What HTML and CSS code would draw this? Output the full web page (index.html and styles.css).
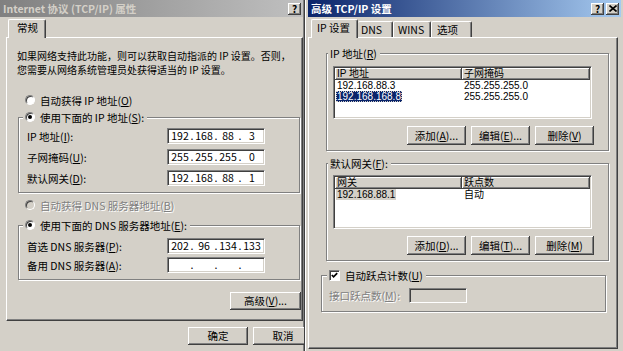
FILE: index.html
```html
<!DOCTYPE html>
<html lang="zh-CN">
<head>
    <meta charset="UTF-8">
    <title>TCP/IP 属性</title>
    <link rel="stylesheet" href="styles.css">
</head>
<body>
    <div class="screen">
        <!-- Internet 协议 (TCP/IP) 属性 -->
        <div class="window win-left">
            <div class="titlebar inactive">
                <span class="title">Internet 协议 (TCP/IP) 属性</span>
                <span class="tbtns"><span class="tbtn">?</span></span>
            </div>
            <div class="tabs tabs-left">
                <div class="tab selected tab-general">常规</div>
            </div>
            <div class="panel panel-left">
                <div class="intro">
                    <div>如果网络支持此功能，则可以获取自动指派的 IP 设置。否则，</div>
                    <div>您需要从网络系统管理员处获得适当的 IP 设置。</div>
                </div>
                <div class="opt opt-auto-ip"><span class="radio"></span>自动获得 IP 地址(<u>O</u>)</div>
                <div class="group group-ip">
                    <div class="legend"><span class="radio on"></span>使用下面的 IP 地址(<u>S</u>):</div>
                    <div class="field"><span class="lbl">IP 地址(<u>I</u>):</span>
                        <span class="ipbox"><span class="oct">192</span><span class="dot">.</span><span class="oct">168</span><span class="dot">.</span><span class="oct">88</span><span class="dot">.</span><span class="oct">3</span></span></div>
                    <div class="field gap5"><span class="lbl">子网掩码(<u>U</u>):</span>
                        <span class="ipbox"><span class="oct">255</span><span class="dot">.</span><span class="oct">255</span><span class="dot">.</span><span class="oct">255</span><span class="dot">.</span><span class="oct">0</span></span></div>
                    <div class="field gap5"><span class="lbl">默认网关(<u>D</u>):</span>
                        <span class="ipbox"><span class="oct">192</span><span class="dot">.</span><span class="oct">168</span><span class="dot">.</span><span class="oct">88</span><span class="dot">.</span><span class="oct">1</span></span></div>
                </div>
                <div class="opt opt-auto-dns disabled"><span class="radio off"></span>自动获得 DNS 服务器地址(<u>B</u>)</div>
                <div class="group group-dns">
                    <div class="legend"><span class="radio on"></span>使用下面的 DNS 服务器地址(<u>E</u>):</div>
                    <div class="field"><span class="lbl">首选 DNS 服务器(<u>P</u>):</span>
                        <span class="ipbox"><span class="oct">202</span><span class="dot">.</span><span class="oct">96</span><span class="dot">.</span><span class="oct">134</span><span class="dot">.</span><span class="oct">133</span></span></div>
                    <div class="field gap3"><span class="lbl">备用 DNS 服务器(<u>A</u>):</span>
                        <span class="ipbox"><span class="oct"></span><span class="dot">.</span><span class="oct"></span><span class="dot">.</span><span class="oct"></span><span class="dot">.</span><span class="oct"></span></span></div>
                </div>
                <div class="adv-row"><button class="btn btn-adv">高级(<u>V</u>)...</button></div>
            </div>
            <div class="footer">
                <button class="btn btn-ok">确定</button>
                <button class="btn btn-ok">取消</button>
            </div>
        </div>

        <!-- 高级 TCP/IP 设置 -->
        <div class="window win-right">
            <div class="titlebar active">
                <span class="title">高级 TCP/IP 设置</span>
                <span class="tbtns">
                    <span class="tbtn">?</span>
                    <span class="tbtn"><svg width="8" height="7" viewBox="0 0 8 7"><path d="M0.5 0.5L7.5 6.5M7.5 0.5L0.5 6.5" stroke="#000" stroke-width="1.6"/></svg></span>
                </span>
            </div>
            <div class="tabs tabs-right">
                <div class="tab selected tab-ip">IP 设置</div>
                <div class="tab tab-dns">DNS</div>
                <div class="tab tab-wins">WINS</div>
                <div class="tab tab-opt">选项</div>
            </div>
            <div class="panel panel-right">
                <div class="group rgroup group-addr">
                    <div class="legend">IP 地址(<u>R</u>)</div>
                    <div class="listview lv-addr">
                        <div class="lv-head"><span class="col1">IP 地址</span><span class="col2">子网掩码</span></div>
                        <div class="lv-row"><span class="col1"><span>192.168.88.3</span></span><span class="col2">255.255.255.0</span></div>
                        <div class="lv-row"><span class="col1"><span class="sel">192.168.168.8</span></span><span class="col2">255.255.255.0</span></div>
                    </div>
                    <div class="btnrow">
                        <button class="btn btn-sm">添加(<u>A</u>)...</button>
                        <button class="btn btn-sm">编辑(<u>E</u>)...</button>
                        <button class="btn btn-sm">删除(<u>V</u>)</button>
                    </div>
                </div>
                <div class="group rgroup group-gw">
                    <div class="legend">默认网关(<u>F</u>):</div>
                    <div class="listview lv-gw">
                        <div class="lv-head"><span class="col1">网关</span><span class="col2">跃点数</span></div>
                        <div class="lv-row"><span class="col1"><span class="sel-idle">192.168.88.1</span></span><span class="col2">自动</span></div>
                    </div>
                    <div class="btnrow">
                        <button class="btn btn-sm">添加(<u>D</u>)...</button>
                        <button class="btn btn-sm">编辑(<u>T</u>)...</button>
                        <button class="btn btn-sm">删除(<u>M</u>)</button>
                    </div>
                </div>
                <div class="group group-metric">
                    <div class="legend"><span class="check"><svg width="7" height="7" viewBox="0 0 7 7"><polyline points="0.8,3 2.6,4.8 6.2,1.2" fill="none" stroke="#000" stroke-width="1.7"/></svg></span>自动跃点计数(<u>U</u>)</div>
                    <div class="field metric"><span class="lbl disabled">接口跃点数(<u>M</u>):</span><span class="textbox"></span></div>
                </div>
            </div>
        </div>
    </div>
</body>
</html>
```

FILE: styles.css
```css
* {
    box-sizing: border-box;
}
body {
    margin: 0;
    width: 623px;
    height: 351px;
    overflow: hidden;
    background: #d4d0c8;
    font-family: "Noto Sans CJK SC", sans-serif;
    font-size: 10.5px;
    line-height: 13px;
    color: #000;
}
u {
    text-decoration: underline;
    text-underline-offset: 1px;
}
.screen {
    display: flex;
    height: 351px;
}
.window {
    display: flex;
    flex-direction: column;
    overflow: hidden;
    background: #d4d0c8;
}
.win-left {
    width: 305px;
    border-right: 1px solid #404040;
    box-shadow: inset -1px 0 #808080;
}
.win-right {
    width: 318px;
    padding: 0 2px 2px 2px;
    border-left: 1px solid #fff;
}

/* title bars */
.titlebar {
    height: 17px;
    flex: none;
    display: flex;
    align-items: center;
    justify-content: space-between;
    padding: 0 2px 0 3px;
    font-weight: bold;
    font-size: 10.5px;
}
.titlebar.inactive {
    background: linear-gradient(90deg, #808080, #c0c0c0);
    color: #d4d0c8;
    margin-right: 1px;
}
.titlebar.active {
    background: linear-gradient(90deg, #0a246a, #a6caf0);
    color: #fff;
}
.tbtns {
    display: flex;
    gap: 2px;
}
.tbtn {
    width: 13px;
    height: 12px;
    display: flex;
    align-items: center;
    justify-content: center;
    background: #d4d0c8;
    color: #000;
    font-size: 10px;
    font-weight: bold;
    line-height: 12px;
    box-shadow: inset -1px -1px #404040, inset 1px 1px #fff, inset -2px -2px #808080;
}

/* tabs */
.tabs {
    display: flex;
    height: 18px;
    margin-top: 2px;
    flex: none;
    align-items: flex-end;
}
.tabs-left {
    padding-left: 8px;
}
.tabs-right {
    padding-left: 3px;
}
.tab {
    height: 16px;
    line-height: 15px;
    border-top: 1px solid #fff;
    border-left: 1px solid #fff;
    border-right: 1px solid #404040;
    border-radius: 2px 2px 0 0;
    box-shadow: inset -1px 0 #808080;
    background: #d4d0c8;
    padding-left: 5px;
}
.tab.selected {
    height: 19px;
    margin-bottom: -1px;
    line-height: 16px;
    position: relative;
    z-index: 1;
}
.tab-general { width: 38px; padding-left: 8px; }
.tab-ip { width: 47px; }
.tab-dns { width: 35px; padding-left: 3px; border-left: none; }
.tab-wins { width: 38px; padding-left: 4px; }
.tab-opt { width: 41px; padding-left: 5px; }

/* tab panels */
.panel {
    border-top: 1px solid #fff;
    border-left: 1px solid #fff;
    border-right: 1px solid #404040;
    border-bottom: 1px solid #404040;
    box-shadow: inset -1px -1px #808080;
    display: flex;
    flex-direction: column;
    align-items: flex-start;
}
.panel-left {
    height: 284px;
    margin-left: 6px;
    width: 297px;
}
.panel-right {
    height: 312px;
    width: 310px;
    flex: none;
}
.intro {
    margin: 11px 0 0 10px;
    font-size: 10px;
    line-height: 14px;
    white-space: nowrap;
}
.opt {
    display: flex;
    align-items: center;
    height: 14px;
    margin-left: 18px;
}
.opt-auto-ip { margin-top: 16px; }
.opt-auto-dns { margin-top: 5px; }
.disabled {
    color: #808080;
    text-shadow: 1px 1px 0 #fff;
}

/* radios and checks */
.radio {
    width: 10px;
    height: 10px;
    flex: none;
    border-radius: 50%;
    background: #fff;
    border: 1px solid;
    border-color: #808080 #fff #fff #808080;
    box-shadow: inset 1px 1px #404040;
    margin-right: 5px;
    display: inline-flex;
    align-items: center;
    justify-content: center;
}
.radio.on::after {
    content: "";
    width: 4px;
    height: 4px;
    border-radius: 50%;
    background: #000;
}
.radio.off {
    background: #d4d0c8;
}
.check {
    width: 11px;
    height: 11px;
    flex: none;
    background: #fff;
    border: 1px solid;
    border-color: #808080 #fff #fff #808080;
    box-shadow: inset 1px 1px #404040;
    margin-right: 5px;
    display: inline-flex;
    align-items: center;
    justify-content: center;
}

/* group boxes */
.group {
    border: 1px solid #808080;
    box-shadow: 1px 1px 0 #fff, inset 1px 1px 0 #fff;
    display: flex;
    flex-direction: column;
}
.legend {
    display: flex;
    align-items: center;
    height: 14px;
    margin-top: -8px;
    padding: 0 3px 0 2px;
    background: #d4d0c8;
    align-self: flex-start;
}
.group-ip {
    margin: 10px 0 0 11px;
    width: 282px;
    padding: 0 0 6px 8px;
}
.group-dns {
    margin: 13px 0 0 11px;
    width: 282px;
    padding: 0 0 6px 8px;
}
.group-ip .legend,
.group-dns .legend {
    margin-left: -4px;
}
.group-ip .legend { margin-bottom: 4px; }
.group-dns .legend { margin-bottom: 6px; }
.field {
    display: flex;
    align-items: center;
    height: 16px;
}
.field.gap5 { margin-top: 5px; }
.field.gap3 { margin-top: 3px; }
.lbl {
    width: 140px;
    flex: none;
}
.ipbox {
    width: 98px;
    height: 16px;
    display: flex;
    background: #fff;
    border: 1px solid;
    border-color: #808080 #fff #fff #808080;
    box-shadow: inset 1px 1px #404040, inset -1px -1px #d4d0c8;
    padding-left: 2px;
    line-height: 14px;
}
.oct {
    width: 20px;
    text-align: center;
}
.dot {
    width: 4px;
    text-align: center;
}
.adv-row {
    margin-top: 12px;
    align-self: flex-end;
    margin-right: 1px;
}

/* buttons */
.btn {
    font: inherit;
    height: 18px;
    padding: 0;
    border: none;
    background: #d4d0c8;
    color: #000;
    box-shadow: inset -1px -1px #404040, inset 1px 1px #fff, inset -2px -2px #808080;
    line-height: 16px;
}
.btn-adv { width: 71px; }
.footer {
    display: flex;
    gap: 5px;
    margin-top: 6px;
    padding-left: 188px;
}
.btn-ok {
    width: 60px;
    flex: none;
}
.btn-sm {
    width: 59px;
    height: 19px;
}
.btnrow {
    display: flex;
    justify-content: flex-end;
    gap: 5px;
    padding-right: 14px;
    margin-top: 7px;
}

/* right side groups */
.rgroup {
    margin-left: 17px;
    width: 283px;
    padding: 0 0 5px 6px;
}
.rgroup .legend {
    margin-left: -5px;
}
.group-addr {
    margin-top: 15px;
}
.group-addr .legend { margin-bottom: 6px; }
.group-gw {
    margin-top: 12px;
}
.group-gw .legend { margin-bottom: 5px; }
.listview {
    width: 259px;
    background: #fff;
    border: 1px solid;
    border-color: #808080 #fff #fff #808080;
    box-shadow: inset 1px 1px #404040, inset -1px -1px #d4d0c8;
    padding: 1px;
    font-family: "Liberation Sans", "Noto Sans CJK SC", sans-serif;
    font-size: 10px;
    line-height: 11px;
}
.lv-addr { height: 53px; }
.lv-gw { height: 54px; }
.lv-head {
    display: flex;
    height: 12px;
    line-height: 12px;
}
.lv-head span {
    background: #d4d0c8;
    box-shadow: inset -1px -1px #404040, inset 1px 1px #fff, inset -2px -2px #808080;
    padding-left: 2px;
}
.lv-head .col1 { width: 127px; }
.lv-head .col2 { flex: 1; }
.lv-row {
    display: flex;
    height: 11px;
}
.lv-row .col1 {
    width: 127px;
    padding-left: 1px;
}
.lv-row .col2 {
    padding-left: 2px;
}
.lv-row .col1 span {
    display: inline-block;
    height: 11px;
    line-height: 11px;
    padding: 0 1px;
}
.lv-row .sel {
    background: #0a246a;
    color: #fff;
    outline: 1px dotted #d4d0c8;
    outline-offset: -1px;
}
.lv-row .sel-idle {
    background: #d4d0c8;
}

.group-metric {
    margin: 14px 0 0 12px;
    width: 285px;
    padding: 0 0 8px 7px;
}
.group-metric .legend {
    margin-left: -2px;
    margin-bottom: 6px;
}
.field.metric {
    height: 15px;
}
.field.metric .lbl {
    width: 80px;
}
.textbox {
    width: 58px;
    height: 15px;
    background: #d4d0c8;
    border: 1px solid;
    border-color: #808080 #fff #fff #808080;
    box-shadow: inset 1px 1px #404040, inset -1px -1px #d4d0c8;
}
```
